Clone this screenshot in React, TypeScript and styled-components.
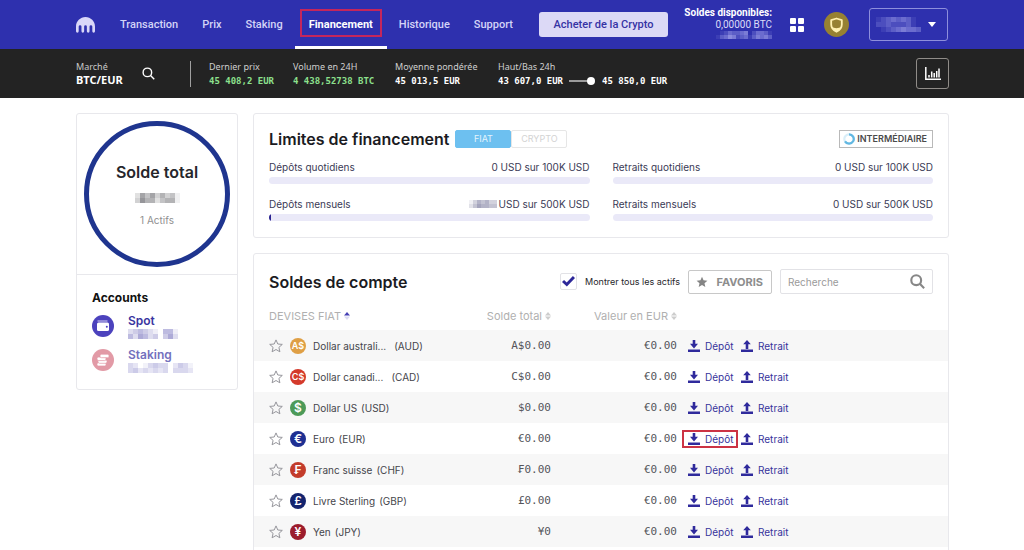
import React from "react";
import styled, { createGlobalStyle } from "styled-components";

const GlobalStyle = createGlobalStyle`
  *, *::before, *::after { box-sizing: border-box; }
  html { scrollbar-width: none; }
  body { margin: 0; background: #fff; color: #26262b; font-family: Inter, "Open Sans", sans-serif; font-size: 11px; line-height: 16px; }
  button, input { font: inherit; color: inherit; margin: 0; }
  a { text-decoration: none; color: inherit; }
  h1, h2, h3, p, dl, dd { margin: 0; }
`;

const barFont = `Roboto, "Noto Sans", sans-serif`;
const tickerFont = `"Noto Sans", "Open Sans", sans-serif`;

/* ---------- top bar ---------- */

const TopBar = styled.header`
  display: flex;
  align-items: center;
  height: 49px;
  padding: 0 76px;
  background: #2e30ae;
  color: #dcdcf8;
  font-family: ${barFont};
`;

const Logo = styled.a`
  display: flex;
  margin-right: 13px;
`;

const Nav = styled.nav`
  display: flex;
  align-self: stretch;
`;

const NavLink = styled.a<{ $active?: boolean }>`
  position: relative;
  display: flex;
  align-items: center;
  padding: 0 ${(p) => (p.$active ? "14px" : "12px")};
  font-size: 11px;
  font-weight: ${(p) => (p.$active ? 700 : 500)};
  color: ${(p) => (p.$active ? "#fff" : "#d4d4f7")};
  box-shadow: ${(p) => (p.$active ? "inset 0 -3px 0 #fff" : "none")};

  &::before {
    content: "";
    display: ${(p) => (p.$active ? "block" : "none")};
    position: absolute;
    inset: 9px 5px 12px;
    border: 2px solid #c4265c;
  }
`;

const BuyButton = styled.button`
  width: 129px;
  height: 25px;
  margin-left: 14px;
  padding: 0;
  border: 0;
  border-radius: 3px;
  background: #dcd9f6;
  color: #3633a4;
  font-size: 11px;
  font-weight: 500;
  white-space: nowrap;
`;

const Available = styled.div`
  display: flex;
  flex-direction: column;
  align-items: flex-end;
  margin-left: auto;
  padding-bottom: 4px;
  font-size: 10px;
  line-height: 12px;
  white-space: nowrap;
`;

const Strong = styled.strong`
  color: #fff;
`;

const IconButton = styled.button`
  display: flex;
  padding: 0;
  border: 0;
  background: none;
`;

const TopActions = styled.div`
  display: flex;
  align-items: center;
  gap: 20px;
  margin-left: 18px;
`;

const ProfileButton = styled.button`
  display: flex;
  align-items: center;
  justify-content: space-between;
  width: 79px;
  height: 33px;
  padding: 0 11px 0 6px;
  border: 1px solid #8e8fdc;
  border-radius: 3px;
  background: none;
`;

/* ---------- ticker ---------- */

const Ticker = styled.section`
  display: flex;
  align-items: center;
  height: 49px;
  padding: 0 75px 0 76px;
  background: #232323;
  color: #fff;
  font-family: ${tickerFont};
`;

const Market = styled.div`
  width: 66px;
  padding-bottom: 2px;
  font-size: 9px;
  line-height: 13px;
  color: #c9c9c9;
`;

const Pair = styled.strong`
  display: block;
  font-size: 11px;
  color: #fff;
`;

const Divider = styled.div`
  width: 1px;
  height: 26px;
  margin: 0 18px 0 35px;
  background: #a0a0a0;
`;

const Stats = styled.dl`
  display: grid;
  flex: 1;
  grid-template-columns: 84px 102px 103px 1fr;
  font-size: 9px;
  line-height: 15px;
  white-space: nowrap;
`;

const StatLabel = styled.dt`
  color: #cfcfcf;
`;

const StatValue = styled.dd<{ $up?: boolean }>`
  display: flex;
  align-items: center;
  gap: 6px;
  font-family: "DejaVu Sans Mono", monospace;
  font-weight: 700;
  color: ${(p) => (p.$up ? "#8de08d" : "#fff")};
`;

const ChartButton = styled.button`
  display: grid;
  place-items: center;
  width: 33px;
  height: 31px;
  padding: 0;
  border: 1px solid #908c88;
  border-radius: 3px;
  background: none;
`;

/* ---------- page ---------- */

const Main = styled.main`
  display: grid;
  grid-template-columns: 162px minmax(0, 1fr);
  align-items: start;
  gap: 15px;
  padding: 15px 75px 0 76px;
`;

const Column = styled.div`
  display: flex;
  flex-direction: column;
  gap: 15px;
`;

const Card = styled.section`
  border: 1px solid #e8e8ec;
  border-radius: 3px;
  background: #fff;
`;

const Total = styled.div`
  display: flex;
  flex-direction: column;
  align-items: center;
  justify-content: center;
  gap: 11px;
  aspect-ratio: 1;
  margin: 7px;
  border: 5px solid #1f358f;
  border-radius: 50%;
`;

const TotalTitle = styled.h2`
  font-size: 16px;
  font-weight: 600;
  line-height: 20px;
`;

const Muted = styled.p`
  font-size: 10px;
  line-height: 12px;
  color: #909090;
`;

const Accounts = styled.div`
  padding: 15px 15px 11px;
  border-top: 1px solid #e8e8ec;
`;

const AccountsTitle = styled.h3`
  font-size: 12px;
  line-height: 16px;
  color: #111;
`;

const Account = styled.a<{ $dim?: boolean }>`
  display: flex;
  align-items: center;
  gap: 14px;
  height: 34px;
  font-size: 12px;
  line-height: 14px;
  font-weight: 600;
  color: ${(p) => (p.$dim ? "#7370bd" : "#3a35a0")};
`;

const AccountText = styled.span`
  display: flex;
  flex-direction: column;
  gap: 1px;
`;

const AccountList = styled.div`
  padding: 3px 0 1px;
`;

const SectionTitle = styled.h2`
  font-size: 16px;
  font-weight: 600;
  line-height: 20px;
  color: #1b1b1f;
  white-space: nowrap;
`;

const LimitsCard = styled(Card)`
  padding: 15px 15px 16px;
`;

const LimitsHead = styled.div`
  display: flex;
  align-items: center;
  gap: 6px;
`;

const Toggle = styled.div`
  display: flex;
`;

const ToggleButton = styled.button<{ $on?: boolean }>`
  width: 56px;
  height: 18px;
  padding: 0;
  border: 1px solid ${(p) => (p.$on ? "#6dc0f0" : "#e6e6e6")};
  border-radius: 2px;
  background: ${(p) => (p.$on ? "#6dc0f0" : "#fff")};
  color: ${(p) => (p.$on ? "#e3f4fd" : "#d3d3d3")};
  font-size: 9px;
  line-height: 12px;
`;

const Level = styled.div`
  display: flex;
  align-items: center;
  justify-content: space-between;
  width: 94px;
  height: 18px;
  margin-left: auto;
  padding: 0 5px 0 3px;
  border: 1px solid #b9b9b9;
  font-size: 9px;
  font-weight: 600;
  color: #4a4a4a;
`;

const LimitGrid = styled.div`
  display: grid;
  grid-template-columns: 1fr 1fr;
  gap: 12px 23px;
  margin-top: 10px;
`;

const LimitLine = styled.div`
  display: flex;
  justify-content: space-between;
  height: 16px;
  margin-bottom: 2px;
  font-size: 10px;
  color: #3a3a55;
`;

const LimitValue = styled.span`
  display: flex;
  align-items: center;
  gap: 2px;
`;

const Track = styled.div`
  height: 7px;
  border-radius: 4px;
  background: #eae9f8;
  overflow: hidden;
`;

const Fill = styled.div`
  height: 100%;
  background: #2b2490;
`;

const BalanceCard = styled(Card)`
  padding-bottom: 32px;
`;

const BalanceHead = styled.div`
  display: flex;
  align-items: center;
  gap: 8px;
  padding: 15px 15px 7px;
`;

const CheckLabel = styled.label`
  position: relative;
  display: flex;
  align-items: center;
  gap: 8px;
  margin-left: auto;
  font-size: 9px;
  white-space: nowrap;

  svg { position: absolute; left: 2px; top: 2px; pointer-events: none; }
  input:not(:checked) ~ svg { display: none; }
`;

const CheckBox = styled.input`
  appearance: none;
  width: 17px;
  height: 17px;
  border: 1px solid #e2e2e6;
  border-radius: 2px;
  background: #fff;
`;

const FavButton = styled.button`
  display: flex;
  align-items: center;
  justify-content: space-between;
  width: 84px;
  height: 24px;
  padding: 0 8px 0 7px;
  border: 1px solid #c8c8c8;
  border-radius: 2px;
  background: #fff;
  color: #8d8d8d;
  font-size: 11px;
  font-weight: 700;
`;

const Search = styled.label`
  display: flex;
  align-items: center;
  width: 153px;
  height: 25px;
  padding: 0 7px;
  border: 1px solid #e2e2e6;
  border-radius: 2px;
  color: #878787;
`;

const SearchInput = styled.input`
  flex: 1;
  min-width: 0;
  padding: 0;
  border: 0;
  outline: 0;
  background: none;
  font-size: 10px;
  &::placeholder { color: #9a9a9a; opacity: 1; }
`;

const Table = styled.table`
  width: 100%;
  table-layout: fixed;
  border-collapse: collapse;
`;

const Th = styled.th<{ $w?: number; $right?: boolean }>`
  width: ${(p) => (p.$w ? p.$w + "px" : "auto")};
  height: 29px;
  padding: 0 0 0 ${(p) => (p.$right ? "0" : "15px")};
  text-align: ${(p) => (p.$right ? "right" : "left")};
  font-size: 11px;
  font-weight: 400;
  color: #b0b0b0;
`;

const HeadLabel = styled.span`
  display: inline-flex;
  align-items: center;
  gap: 3px;
`;

const Row = styled.tr`
  height: 31px;
  &:nth-child(odd) { background: #f7f7f7; }
`;

const NameCell = styled.td`
  padding: 0 0 0 15px;
`;

const Asset = styled.div`
  display: flex;
  align-items: center;
  gap: 7px;
  font-size: 10px;
  color: #45454b;
  white-space: nowrap;
`;

const AssetName = styled.span<{ $long?: boolean }>`
  display: flex;
  gap: ${(p) => (p.$long ? "8px" : "4px")};
`;

const Coin = styled.span<{ $color: string }>`
  display: grid;
  place-items: center;
  width: 16px;
  height: 16px;
  border-radius: 50%;
  background: ${(p) => p.$color};
  color: #fff;
  font-size: 12px;
  line-height: 16px;
  font-weight: 600;
`;

const CoinPair = styled(Coin)`
  font-size: 9px;
`;

const Amount = styled.td`
  padding: 0;
  text-align: right;
  font-family: "DejaVu Sans Mono", monospace;
  font-size: 11px;
  color: #55555b;
`;

const ActionCell = styled.td`
  padding: 0 0 0 5px;
`;

const Actions = styled.div`
  display: flex;
`;

const Action = styled.a<{ $marked?: boolean; $second?: boolean }>`
  display: flex;
  align-items: center;
  gap: 5px;
  height: 18px;
  width: 56px;
  padding-left: ${(p) => (p.$second ? "1px" : "4px")};
  border: 2px solid ${(p) => (p.$marked ? "#cc3344" : "transparent")};
  font-size: 10px;
  color: #36339c;
`;

/* ---------- drawings ---------- */

const Mosaic = ({ cells, size, color }: { cells: string[]; size: number; color: string }) => (
  <svg width={cells[0].length * size} height={cells.length * size} shapeRendering="crispEdges" aria-hidden="true">
    {cells.flatMap((row, y) =>
      [...row].map((v, x) => (
        <rect key={`${x}-${y}`} x={x * size} y={y * size} width={size} height={size} fill={color} opacity={Number(v) / 9} />
      ))
    )}
  </svg>
);

const KrakenMark = () => (
  <svg width="19" height="16" viewBox="0 0 24 20" fill="#d9d7f8" aria-label="Kraken">
    <path d="M12 0C5.4 0 0 5.4 0 12v6a1.7 1.7 0 0 0 3.4 0v-6a1.75 1.75 0 0 1 3.5 0v6a1.7 1.7 0 0 0 3.4 0v-6a1.7 1.7 0 0 1 3.4 0v6a1.7 1.7 0 0 0 3.4 0v-6a1.75 1.75 0 0 1 3.5 0v6a1.7 1.7 0 0 0 3.4 0v-6C24 5.4 18.6 0 12 0z" />
  </svg>
);

const Lens = ({ size, weight }: { size: number; weight: number }) => (
  <svg width={size} height={size} viewBox="0 0 14 14" fill="none" stroke="currentColor" strokeWidth={weight} aria-hidden="true">
    <circle cx="5.8" cy="5.8" r="4.6" />
    <path d="M9.2 9.2 13.2 13.2" />
  </svg>
);

const STAR = "M7 .9 8.8 5l4.5.4-3.4 3 1 4.4L7 10.5l-3.9 2.3 1-4.4-3.4-3L5.2 5z";

const StarOutline = () => (
  <svg width="14" height="14" viewBox="0 0 14 14" fill="none" stroke="#96969c" aria-hidden="true">
    <path d={STAR} />
  </svg>
);

const Transfer = ({ up }: { up?: boolean }) => (
  <svg width="12" height="12" viewBox="0 0 12 12" fill="#2f2a9c" aria-hidden="true">
    <path d={up ? "M6 0 9.8 4.2H7.3V9H4.7V4.2H2.2z" : "M4.7 0h2.6v3.8H10L6 8.4 2 3.8h2.7z"} />
    <path d="M0 9.5h12V12H0z" />
  </svg>
);

const Sort = ({ active }: { active?: boolean }) => (
  <svg width="6" height="8" viewBox="0 0 6 8" aria-hidden="true">
    <path d="M3 0 6 3.5H0z" fill={active ? "#4540b4" : "#cdcdcd"} />
    <path d="M3 8 6 4.5H0z" fill={active ? "#dcdcf2" : "#cdcdcd"} />
  </svg>
);

/* ---------- data ---------- */

const limits = [
  { label: "Dépôts quotidiens", value: "0 USD sur 100K USD", used: 0 },
  { label: "Retraits quotidiens", value: "0 USD sur 100K USD", used: 0 },
  { label: "Dépôts mensuels", value: "USD sur 500K USD", used: 0.7, hidden: true },
  { label: "Retraits mensuels", value: "0 USD sur 500K USD", used: 0 },
];

const assets = [
  { code: "AUD", name: "Dollar australi...", long: true, total: "A$0.00", value: "€0.00", coin: "A$", color: "#df9f45" },
  { code: "CAD", name: "Dollar canadi...", long: true, total: "C$0.00", value: "€0.00", coin: "C$", color: "#d43a2c" },
  { code: "USD", name: "Dollar US", total: "$0.00", value: "€0.00", coin: "$", color: "#4d9a58" },
  { code: "EUR", name: "Euro", total: "€0.00", value: "€0.00", coin: "€", color: "#1e2f92", marked: true },
  { code: "CHF", name: "Franc suisse", total: "₣0.00", value: "€0.00", coin: "₣", color: "#c33c2b" },
  { code: "GBP", name: "Livre Sterling", total: "£0.00", value: "€0.00", coin: "£", color: "#14246f" },
  { code: "JPY", name: "Yen", total: "¥0", value: "€0.00", coin: "¥", color: "#9c1c2c" },
];

const navItems = ["Transaction", "Prix", "Staking", "Financement", "Historique", "Support"];

export default function App() {
  return (
    <>
      <GlobalStyle />
      <TopBar>
        <Logo href="#"><KrakenMark /></Logo>
        <Nav>
          {navItems.map((item) => (
            <NavLink key={item} href="#" $active={item === "Financement"}>{item}</NavLink>
          ))}
        </Nav>
        <BuyButton>Acheter de la Crypto</BuyButton>
        <Available>
          <Strong>Soldes disponibles:</Strong>
          <span>0,00000 BTC</span>
          <Mosaic size={4} color="#b9b9f5" cells={["01243345024431", "13465234135453"]} />
        </Available>
        <TopActions>
          <IconButton aria-label="Applications">
            <svg width="14" height="14" viewBox="0 0 14 14" fill="#fff">
              <rect width="6" height="6" rx="1" /><rect x="8" width="6" height="6" rx="1" />
              <rect y="8" width="6" height="6" rx="1" /><rect x="8" y="8" width="6" height="6" rx="1" />
            </svg>
          </IconButton>
          <IconButton aria-label="Sécurité">
            <svg width="25" height="25" viewBox="0 0 25 25">
              <circle cx="12.5" cy="12.5" r="12.5" fill="#978132" />
              <path d="M12.5 6.5 17.8 8.2v4.3c0 3.6-2 5.7-5.3 7.3-3.3-1.6-5.3-3.7-5.3-7.3V8.2z" fill="none" stroke="#fff0b0" strokeWidth="1.8" strokeLinejoin="round" />
              <path d="M8 14.5c1.5 2.2 7.5 2.2 9 0-.7 2.4-2.2 4-4.5 5.2-2.3-1.2-3.8-2.8-4.5-5.2z" fill="#fff0b0" />
            </svg>
          </IconButton>
          <ProfileButton aria-label="Profil">
            <Mosaic size={5} color="#b9b9f5" cells={["123434310", "223222310", "012345443"]} />
            <svg width="8" height="5" viewBox="0 0 8 5" fill="#fff" aria-hidden="true"><path d="M0 0h8L4 5z" /></svg>
          </ProfileButton>
        </TopActions>
      </TopBar>

      <Ticker>
        <Market>Marché<Pair>BTC/EUR</Pair></Market>
        <IconButton aria-label="Rechercher un marché"><Lens size={13} weight={1.5} /></IconButton>
        <Divider />
        <Stats>
          <div><StatLabel>Dernier prix</StatLabel><StatValue $up>45 408,2 EUR</StatValue></div>
          <div><StatLabel>Volume en 24H</StatLabel><StatValue $up>4 438,52738 BTC</StatValue></div>
          <div><StatLabel>Moyenne pondérée</StatLabel><StatValue>45 013,5 EUR</StatValue></div>
          <div>
            <StatLabel>Haut/Bas 24h</StatLabel>
            <StatValue>
              43 607,0 EUR
              <svg width="27" height="8" viewBox="0 0 27 8" aria-hidden="true">
                <path d="M0 4h20" stroke="#9b9b9b" strokeWidth="2" />
                <circle cx="22" cy="4" r="4" fill="#fff" />
              </svg>
              45 850,0 EUR
            </StatValue>
          </div>
        </Stats>
        <ChartButton aria-label="Graphique">
          <svg width="16" height="13" viewBox="0 0 16 13" fill="none" stroke="#fff" strokeWidth="1.5" aria-hidden="true">
            <path d="M.8 0v12.2H16" /><path d="M4 10.5V8M6.7 10.5V4.5M9.2 10.5V6M11.7 10.5V4M14 10.5V1.5" />
          </svg>
        </ChartButton>
      </Ticker>

      <Main>
        <Card>
          <Total>
            <TotalTitle>Solde total</TotalTitle>
            <Mosaic size={5} color="#77777b" cells={["264635341", "375524551"]} />
            <Muted>1 Actifs</Muted>
          </Total>
          <Accounts>
            <AccountsTitle>Accounts</AccountsTitle>
            <AccountList>
              <Account href="#">
                <svg width="22" height="22" viewBox="0 0 22 22" aria-hidden="true">
                  <circle cx="11" cy="11" r="11" fill="#4c42bd" />
                  <path d="M5.5 6h10" stroke="#d9d5f5" />
                  <rect x="5" y="7.5" width="12" height="8.5" rx="1.5" fill="#fff" />
                  <circle cx="14.8" cy="11.8" r="1" fill="#4c42bd" />
                </svg>
                <AccountText>
                  Spot
                  <Mosaic size={5} color="#6b66b8" cells={["2343210441", "4254230352"]} />
                </AccountText>
              </Account>
              <Account href="#" $dim>
                <svg width="22" height="22" viewBox="0 0 22 22" aria-hidden="true">
                  <circle cx="11" cy="11" r="11" fill="#e29aa6" />
                  <g fill="#fff" stroke="#e29aa6" strokeWidth=".7">
                    <rect x="5" y="13.5" width="9" height="3.5" rx="1.5" /><rect x="6" y="10.8" width="9" height="3.5" rx="1.5" />
                    <rect x="5" y="8.1" width="9" height="3.5" rx="1.5" /><rect x="8" y="5.2" width="9" height="3.5" rx="1.5" />
                  </g>
                </svg>
                <AccountText>
                  Staking
                  <Mosaic size={5} color="#8d89cc" cells={["3201343302431", "3423232303332"]} />
                </AccountText>
              </Account>
            </AccountList>
          </Accounts>
        </Card>

        <Column>
          <LimitsCard>
            <LimitsHead>
              <SectionTitle>Limites de financement</SectionTitle>
              <Toggle>
                <ToggleButton $on>FIAT</ToggleButton>
                <ToggleButton>CRYPTO</ToggleButton>
              </Toggle>
              <Level>
                <svg width="12" height="12" viewBox="0 0 12 12" fill="none" strokeWidth="2.2" aria-hidden="true">
                  <circle cx="6" cy="6" r="4.7" stroke="#d9eef8" />
                  <path d="M6 1.3a4.7 4.7 0 1 1-4 7.1" stroke="#62b8e2" />
                </svg>
                INTERMÉDIAIRE
              </Level>
            </LimitsHead>
            <LimitGrid>
              {limits.map((l) => (
                <div key={l.label}>
                  <LimitLine>
                    <span>{l.label}</span>
                    <LimitValue>
                      {l.hidden && <Mosaic size={4} color="#77779a" cells={["1354533", "2465544"]} />}
                      {l.value}
                    </LimitValue>
                  </LimitLine>
                  <Track><Fill style={{ width: `${l.used}%` }} /></Track>
                </div>
              ))}
            </LimitGrid>
          </LimitsCard>

          <BalanceCard>
            <BalanceHead>
              <SectionTitle>Soldes de compte</SectionTitle>
              <CheckLabel>
                <CheckBox type="checkbox" defaultChecked />
                Montrer tous les actifs
                <svg width="13" height="12" viewBox="0 0 13 12" fill="none" stroke="#2d2799" strokeWidth="3" aria-hidden="true">
                  <path d="M1 6 4.8 9.5 12 2" />
                </svg>
              </CheckLabel>
              <FavButton>
                <svg width="12" height="12" viewBox="0 0 14 14" fill="#858585" aria-hidden="true"><path d={STAR} /></svg>
                FAVORIS
              </FavButton>
              <Search>
                <SearchInput type="search" placeholder="Recherche" aria-label="Recherche" />
                <Lens size={15} weight={2} />
              </Search>
            </BalanceHead>
            <Table>
              <thead>
                <tr>
                  <Th $w={176}><HeadLabel>DEVISES FIAT<Sort active /></HeadLabel></Th>
                  <Th $w={121} $right><HeadLabel>Solde total<Sort /></HeadLabel></Th>
                  <Th $w={126} $right><HeadLabel>Valeur en EUR<Sort /></HeadLabel></Th>
                  <Th aria-label="Actions" />
                </tr>
              </thead>
              <tbody>
                {assets.map((a) => {
                  const Badge = a.coin.length > 1 ? CoinPair : Coin;
                  return (
                    <Row key={a.code}>
                      <NameCell>
                        <Asset>
                          <IconButton aria-label={`Ajouter ${a.code} aux favoris`}><StarOutline /></IconButton>
                          <Badge $color={a.color}>{a.coin}</Badge>
                          <AssetName $long={a.long}><span>{a.name}</span><span>({a.code})</span></AssetName>
                        </Asset>
                      </NameCell>
                      <Amount>{a.total}</Amount>
                      <Amount>{a.value}</Amount>
                      <ActionCell>
                        <Actions>
                          <Action href="#" $marked={a.marked}><Transfer />Dépôt</Action>
                          <Action href="#" $second><Transfer up />Retrait</Action>
                        </Actions>
                      </ActionCell>
                    </Row>
                  );
                })}
              </tbody>
            </Table>
          </BalanceCard>
        </Column>
      </Main>
    </>
  );
}
